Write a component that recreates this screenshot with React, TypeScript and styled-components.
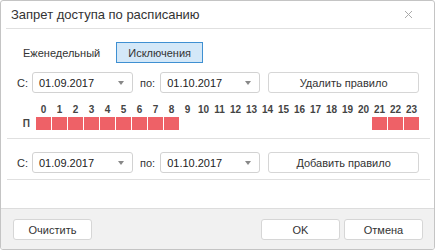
import React from "react";
import styled, { createGlobalStyle } from "styled-components";

const Global = createGlobalStyle`
  html, body { margin: 0; padding: 0; background: #fff; }
  body { font-family: "Liberation Sans", Arial, sans-serif; font-size: 11px; color: #333; }
  * { box-sizing: border-box; }
`;

const Dialog = styled.div`
  width: 435px;
  height: 250px;
  border: 1px solid #c4c4c4;
  border-radius: 3px;
  display: flex;
  flex-direction: column;
  overflow: hidden;
  background: #fff;
`;

const Header = styled.div`
  height: 28px;
  margin: 0 3px 0 5px;
  padding: 0 18px 0 5px;
  border-bottom: 1px solid #e0e0e0;
  display: flex;
  align-items: center;
  justify-content: space-between;
`;

const Title = styled.div`
  font-size: 13px;
  color: #333;
`;

const Close = styled.span`
  width: 9px;
  height: 9px;
  display: flex;
`;

const Body = styled.div`
  flex: 1;
  display: flex;
  flex-direction: column;
  padding: 0 4px 0 6px;
`;

const Tabs = styled.div`
  display: flex;
  gap: 4px;
  margin: 13px 0 0 4px;
`;

const Tab = styled.div<{ $active?: boolean }>`
  height: 21px;
  padding: 0 11px;
  display: flex;
  align-items: center;
  border: 1px solid ${(p) => (p.$active ? "#3f90d2" : "transparent")};
  background: ${(p) => (p.$active ? "#d4e8f8" : "transparent")};
  color: #333;
`;

const Section = styled.div<{ $top: number; $bottom: number }>`
  padding: ${(p) => p.$top}px 0 ${(p) => p.$bottom}px 10px;
  border-bottom: 1px solid #e0e0e0;
`;

const Row = styled.div`
  display: flex;
  align-items: center;
  height: 21px;
`;

const Label = styled.span<{ $ml?: number; $mr?: number }>`
  margin-left: ${(p) => p.$ml ?? 0}px;
  margin-right: ${(p) => p.$mr ?? 0}px;
  color: #333;
`;

const Combo = styled.div<{ $w: number }>`
  width: ${(p) => p.$w}px;
  height: 21px;
  border: 1px solid #d2d2d2;
  border-radius: 3px;
  display: flex;
  align-items: center;
  justify-content: space-between;
  padding: 0 8px 0 6px;
  color: #222;
`;

const Arrow = styled.span`
  width: 0;
  height: 0;
  border-left: 3.5px solid transparent;
  border-right: 3.5px solid transparent;
  border-top: 4px solid #888;
`;

const Button = styled.div<{ $w: number; $ml?: number }>`
  width: ${(p) => p.$w}px;
  height: 21px;
  margin-left: ${(p) => p.$ml ?? 0}px;
  border: 1px solid #d6d6d6;
  border-radius: 3px;
  background: #fff;
  display: flex;
  align-items: center;
  justify-content: center;
  color: #333;
`;

const Hours = styled.div`
  display: grid;
  grid-template-columns: 18px repeat(24, 15px);
  grid-template-rows: 12px 13px;
  column-gap: 1px;
  row-gap: 1px;
  margin-top: 11px;
`;

const HourNum = styled.div`
  font-size: 10px;
  font-weight: bold;
  color: #444;
  text-align: center;
  line-height: 12px;
`;

const DayLabel = styled.div`
  font-size: 10px;
  font-weight: bold;
  color: #444;
  text-align: right;
  padding-right: 5px;
  line-height: 13px;
`;

const Cell = styled.div<{ $on: boolean }>`
  background: ${(p) => (p.$on ? "#ee6167" : "transparent")};
`;

const Footer = styled.div`
  height: 41px;
  border-top: 1px solid #dcdcdc;
  background: #f1f1f1;
  display: flex;
  align-items: flex-start;
  padding: 10px 11px 0 12px;
  gap: 4px;
`;

const Spacer = styled.div`
  flex: 1;
`;

const hours = Array.from({ length: 24 }, (_, i) => i);
const active = (h: number) => h <= 8 || h >= 21;

function DateRow({ action }: { action: string }) {
  return (
    <Row>
      <Label $mr={4}>С:</Label>
      <Combo $w={101}>
        01.09.2017
        <Arrow />
      </Combo>
      <Label $ml={7} $mr={5}>по:</Label>
      <Combo $w={100}>
        01.10.2017
        <Arrow />
      </Combo>
      <Button $w={151} $ml={8}>{action}</Button>
    </Row>
  );
}

export default function App() {
  return (
    <>
      <Global />
      <Dialog>
        <Header>
          <Title>Запрет доступа по расписанию</Title>
          <Close>
            <svg width="9" height="9" viewBox="0 0 9 9">
              <path d="M1 1 L8 8 M8 1 L1 8" stroke="#aaa" strokeWidth="1" />
            </svg>
          </Close>
        </Header>
        <Body>
          <Tabs>
            <Tab>Еженедельный</Tab>
            <Tab $active>Исключения</Tab>
          </Tabs>
          <Section $top={9} $bottom={8}>
            <DateRow action="Удалить правило" />
            <Hours>
              <div />
              {hours.map((h) => (
                <HourNum key={h}>{h}</HourNum>
              ))}
              <DayLabel>П</DayLabel>
              {hours.map((h) => (
                <Cell key={h} $on={active(h)} />
              ))}
            </Hours>
          </Section>
          <Section $top={13} $bottom={6}>
            <DateRow action="Добавить правило" />
          </Section>
        </Body>
        <Footer>
          <Button $w={79}>Очистить</Button>
          <Spacer />
          <Button $w={79}>OK</Button>
          <Button $w={79}>Отмена</Button>
        </Footer>
      </Dialog>
    </>
  );
}
